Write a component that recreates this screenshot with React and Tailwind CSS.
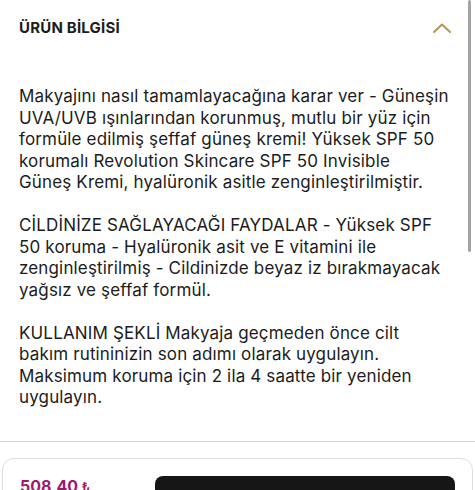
import React from 'react';

const paragraphs = [
  [
    'Makyajını nasıl tamamlayacağına karar ver - Güneşin',
    'UVA/UVB ışınlarından korunmuş, mutlu bir yüz için',
    'formüle edilmiş şeffaf güneş kremi! Yüksek SPF 50',
    'korumalı Revolution Skincare SPF 50 Invisible',
    'Güneş Kremi, hyalüronik asitle zenginleştirilmiştir.',
  ],
  [
    'CİLDİNİZE SAĞLAYACAĞI FAYDALAR - Yüksek SPF',
    '50 koruma - Hyalüronik asit ve E vitamini ile',
    'zenginleştirilmiş - Cildinizde beyaz iz bırakmayacak',
    'yağsız ve şeffaf formül.',
  ],
  [
    'KULLANIM ŞEKLİ Makyaja geçmeden önce cilt',
    'bakım rutininizin son adımı olarak uygulayın.',
    'Maksimum koruma için 2 ila 4 saatte bir yeniden',
    'uygulayın.',
  ],
];

const App = () => {
  return (
    <div className="relative w-[475px] h-[490px] overflow-hidden bg-white text-[#1c1c1c]" style={{ fontFamily: 'Inter, "Noto Sans", sans-serif' }}>
      {/* scroll indicator */}
      <div className="absolute right-[4px] top-0 w-[3px] h-[252px] rounded-full bg-[#a3a3a3]" />

      <div className="flex items-center justify-between pl-[19px] pr-[23px] pt-[18px] pb-[18px]">
        <h2 className="text-[15px] font-bold tracking-[0.2px] leading-[20px]">ÜRÜN BİLGİSİ</h2>
        <svg width="20" height="12" viewBox="0 0 20 12" fill="none">
          <path d="M2 10 L10 2.5 L18 10" stroke="#b8935a" strokeWidth="2" strokeLinecap="round" strokeLinejoin="round" />
        </svg>
      </div>

      <div className="px-[19px] pt-[30px] flex flex-col gap-[21.5px] text-[17px] leading-[21.5px] tracking-[0.15px]">
        {paragraphs.map((lines, i) => (
          <p key={i}>
            {lines.map((l, j) => (
              <span key={j} className="block whitespace-nowrap">{l}</span>
            ))}
          </p>
        ))}
      </div>

      <div className="mt-[32px] border-t border-[#d4d4d4]" />

      <div className="mt-[16px] mx-[2px] border border-[#dedede] rounded-[12px] h-[60px] flex items-start pl-[17px] pr-[17px] pt-[17px]">
        <div className="w-[135px] text-[#9c1a6c] font-bold text-[16px] leading-[20px]">
          508,40 <span className="text-[13px] font-semibold">₺</span>
        </div>
        <button className="flex-1 h-[40px] bg-[#161616] rounded-[8px] text-white text-[15px] font-bold text-left pl-[17px] pt-[10px] self-start leading-[20px]">
          TEKRAR STOĞA GİRDİĞİNDE
        </button>
      </div>
    </div>
  );
};

export default App;
